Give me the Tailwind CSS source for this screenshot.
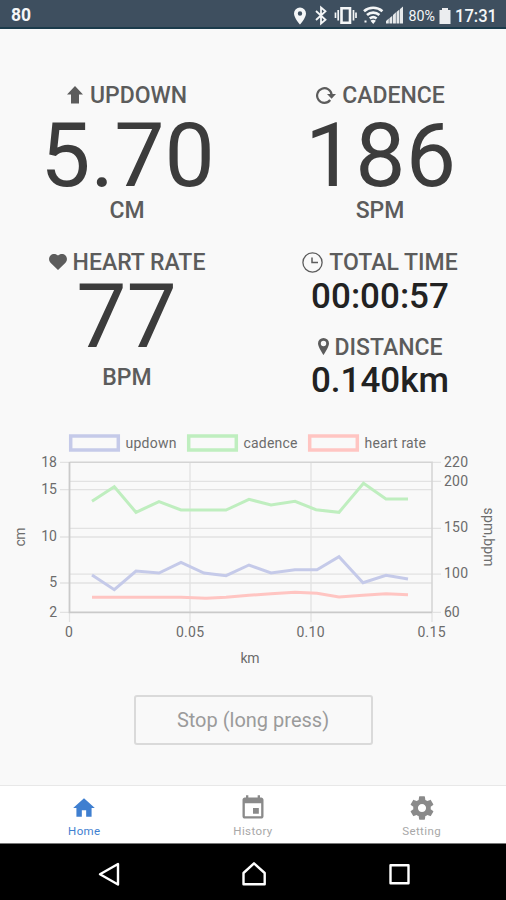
<!DOCTYPE html>
<html lang="en">

<head>
    <meta charset="UTF-8">
    <meta name="viewport" content="width=device-width, initial-scale=1.0">
    <title>Running Monitor</title>
    <script src="https://cdn.jsdelivr.net/npm/@tailwindcss/browser@4"></script>
</head>

<body class="bg-[#f9f9f9] font-[Roboto,sans-serif]">
    <div class="w-[506px] h-[900px] flex flex-col overflow-hidden">
        <header class="h-[29px] shrink-0 bg-[#3e4f5f] border-b-2 border-[#1b3b4b] flex items-center justify-between pl-[11px] pr-[5px] pt-[3px] text-[#f4f6f7]">
            <span class="text-[17.500px] font-bold">80</span>
            <svg class="w-[224px] h-[26px]" viewBox="277 2 224 26" fill="currentColor">
                <path d="M300 7.500a6 6 0 0 0-6 6c0 4.400 6 11 6 11s6-6.600 6-11a6 6 0 0 0-6-6zm0 8.200a2.200 2.200 0 1 1 0-4.400 2.200 2.200 0 0 1 0 4.400z" />
                <path d="M316 11l9.500 8.800-4.500 3.700V7.500l4.500 3.700-9.500 8.800" fill="none" stroke="currentColor" stroke-width="1.800" />
                <path d="M341.500 8.300h8.500v14.400h-8.500z" fill="none" stroke="currentColor" stroke-width="2.600" />
                <path d="M338.200 10v10.500M353.500 10v10.500M335.500 12.500v5.500M356 12.500v5.500" stroke="currentColor" stroke-width="1.700" />
                <g fill="none" stroke="currentColor" stroke-width="2.700">
                    <path d="M364 11.200a14 14 0 0 1 18.400 0M367 14.900a9.500 9.500 0 0 1 12.400 0M369.800 18.500a5.500 5.500 0 0 1 6.800 0" />
                </g>
                <path d="M370.500 20.700q2.700-1.800 5.400 0L373.200 24zM364.500 20.500h2v2h-2z" />
                <path d="M386 23.500V21l2.800-2.500v5zM389.400 23.500v-5.200l2.900-2.600v7.800zM393 23.500V15l2.900-2.700v11.200zM396.500 23.500V12l2.900-2.600v14.100zM400 23.500V9l3-2.500v17z" opacity=".92" />
                <text x="408.500" y="21" font-size="15" textLength="26.500" lengthAdjust="spacingAndGlyphs">80%</text>
                <path d="M439.500 10h2.500V8h6v2h2.500v14h-11z" opacity=".95" />
                <text x="455" y="22" font-size="18" font-weight="500" textLength="42" lengthAdjust="spacingAndGlyphs">17:31</text>
            </svg>
        </header>

        <main class="flex-1 flex flex-col items-center">
            <section class="w-full grid grid-cols-2 content-start pt-[54px] h-[403px] text-center text-[#5c5c5c] text-[23px] font-medium">
                <div>
                    <h2 class="h-6 pt-[2px] leading-6 flex justify-center items-center gap-[7px] pl-px">
                        <svg class="-mt-[2px] w-4 h-[18px]" viewBox="0 0 16 18" fill="currentColor"><path d="M8 0l8 8.500h-4V17.500H4V8.500H0z" /></svg>
                        UPDOWN
                    </h2>
                    <p class="mt-[13px] text-[89.500px] leading-[72px] font-normal text-[#3c3c3c] pl-[2px]">5.70</p>
                    <p class="mt-[7px] leading-6 pl-px">CM</p>
                </div>
                <div>
                    <h2 class="h-6 pt-[2px] leading-6 flex justify-center items-center gap-[6px] pl-[2px]">
                        <svg class="-mt-[2px] w-5 h-[18px]" viewBox="0 0 20 18" fill="none" stroke="currentColor" stroke-width="2.200"><path d="M14.200 14A7.300 7.300 0 1 1 15.700 9" /><path d="M11 8h9l-4.400 4.800z" fill="currentColor" stroke="none" /></svg>
                        CADENCE
                    </h2>
                    <p class="mt-[13px] text-[89.500px] leading-[72px] font-normal text-[#3c3c3c] pl-[2px]">186</p>
                    <p class="mt-[7px] leading-6 pl-px">SPM</p>
                </div>
                <div class="pt-[27px]">
                    <h2 class="h-6 pt-[2px] leading-6 flex justify-center items-center gap-[6px] pl-px">
                        <svg class="-mt-[2px] w-[18px] h-4" viewBox="0 0 18 16" fill="currentColor"><path d="M9 16L1.500 8.700C-.5 6.500-.3 3.200 1.500 1.400 3.700-.6 7.200-.3 9 1.600 10.800-.3 14.300-.6 16.500 1.400c1.800 1.800 2 5.100 0 7.300z" /></svg>
                        HEART RATE
                    </h2>
                    <p class="mt-[7px] text-[89.500px] leading-[72px] font-normal text-[#3c3c3c]">77</p>
                    <p class="mt-[13px] leading-6 pl-px">BPM</p>
                </div>
                <div class="pt-[27px]">
                    <h2 class="h-6 pt-[2px] leading-6 flex justify-center items-center gap-[6px] pl-px">
                        <svg class="-mt-[2px] size-[21px]" viewBox="0 0 21 21" fill="none" stroke="currentColor"><circle cx="10.500" cy="10.500" r="9.600" stroke-width="1.300" /><path d="M10 5.500v5h6" stroke-width="1.500" /></svg>
                        TOTAL TIME
                    </h2>
                    <p class="text-[35px] leading-[46px] text-[#222] pl-px">00:00:57</p>
                    <h2 class="h-6 pt-[2px] leading-6 mt-[15px] flex justify-center items-center gap-[6px] pl-px">
                        <svg class="-mt-[4px] w-[11px] h-[17px]" viewBox="0 0 11 17" fill="currentColor"><path fill-rule="evenodd" d="M5.500 0A5.500 5.500 0 0 0 0 5.500C0 9 5.500 17 5.500 17S11 9 11 5.500A5.500 5.500 0 0 0 5.500 0zm0 8.200a2.700 2.700 0 1 1 0-5.400 2.700 2.700 0 0 1 0 5.400z" /></svg>
                        DISTANCE
                    </h2>
                    <p class="text-[35px] leading-[44px] text-[#222] pl-px">0.140km</p>
                </div>
            </section>

            <svg class="w-[506px] h-[238px] shrink-0" viewBox="0 432 506 238" font-size="14" fill="#6c6c6c">
                <!-- legend -->
                <g fill="none" stroke-width="3.500">
                    <path d="M70.700 436.100h47.600v14H70.700z" stroke="#c5cae9" />
                    <path d="M188.700 436.100h47.600v14h-47.600z" stroke="#bfeebf" />
                    <path d="M309.700 436.100h47.600v14h-47.600z" stroke="#ffc5c2" />
                </g>
                <text x="125.500" y="447.500" textLength="51">updown</text>
                <text x="243.500" y="447.500" textLength="54">cadence</text>
                <text x="364.500" y="447.500" textLength="61.500">heart rate</text>

                <!-- grid -->
                <g fill="none" stroke="#e2e2e2" stroke-width="1.300">
                    <path d="M60 489.700h372M60 537h372M60 583h372M69 481.300h372M69 528.300h372M69 574.200h372" />
                    <path d="M190 462v160M311 462v160M60 462.300h9M60 612.300h9M432 462.300h9M432 612.300h9M69.500 612v10M432 612v10" />
                </g>
                <path d="M69.500 462.300H432V612.300" fill="none" stroke="#d4d4d4" stroke-width="1.500" />
                <path d="M69.500 462V612.300H432" fill="none" stroke="#cacaca" stroke-width="1.800" />

                <!-- series -->
                <g fill="none" stroke-width="3">
                    <path d="M92 597.300H181L206 598.300 226 597.300 249 595.300 271 593.700 295 592.300 317 593.300 339 597 363 595.300 386 593.700 408 594.700" stroke="#ffc5c2" />
                    <path d="M92 501.300L114.300 486.700 136 512.300 159 501.700 181 510H226L249 499.300 271 505 295 501.300 316 509.700 339 512.300 363.500 483.300 386 499H408" stroke="#bfeebf" />
                    <path d="M92 575L114.300 589.700 136 571 159 573 181 562.300 204 573 226 575.700 249 565 271 573 295 569.700H317L339 556.700 363 582.700 386 575.300 408 579" stroke="#c5cae9" />
                </g>

                <!-- axis labels -->
                <g text-anchor="end">
                    <text x="57" y="466.700">18</text>
                    <text x="57" y="494">15</text>
                    <text x="57" y="541.300">10</text>
                    <text x="57" y="587.300">5</text>
                    <text x="57" y="616.700">2</text>
                </g>
                <text x="444" y="466.700" textLength="24">220</text>
                <text x="444" y="485.700" textLength="24">200</text>
                <text x="444" y="532.300" textLength="24">150</text>
                <text x="444" y="578.300" textLength="24">100</text>
                <text x="444" y="616.700">60</text>
                <g text-anchor="middle">
                    <text x="69" y="636.500">0</text>
                    <text x="190" y="636.500" textLength="28">0.05</text>
                    <text x="310.500" y="636.500" textLength="28">0.10</text>
                    <text x="431.500" y="636.500" textLength="28">0.15</text>
                    <text x="250" y="662.500" textLength="19">km</text>
                    <text transform="translate(24.500 537) rotate(-90)" textLength="19">cm</text>
                    <text transform="translate(483.500 537) rotate(90)" textLength="59">spm,bpm</text>
                </g>
            </svg>

            <button class="mt-[25px] w-[239px] h-[50px] border-2 border-[#dadada] rounded-[3px] text-[20px] text-[#9b9b9b]">Stop (long press)</button>
        </main>

        <nav class="h-[58px] shrink-0 bg-white border-t border-[#e8e8e8] grid grid-cols-3 text-[11.500px] tracking-[0.4px] text-[#a8a8a8]">
            <div class="flex flex-col items-center pt-[9px] text-[#3f7fd0]">
                <svg class="size-[26px]" viewBox="0 0 24 24" fill="currentColor"><path d="M10 20v-6h4v6h5v-8h3L12 3 2 12h3v8z" /></svg>
                <span class="leading-[20px]">Home</span>
            </div>
            <div class="flex flex-col items-center pt-[9px]">
                <svg class="size-[28px] -mt-px -mb-px text-[#8a8a8a]" viewBox="0 0 24 24" fill="currentColor"><path d="M17 12h-5v5h5v-5zM16 1v2H8V1H6v2H5c-1.110 0-1.990.9-1.990 2L3 19c0 1.100.89 2 2 2h14c1.100 0 2-.9 2-2V5c0-1.100-.9-2-2-2h-1V1h-2zm3 18H5V8h14v11z" /></svg>
                <span class="leading-[20px]">History</span>
            </div>
            <div class="flex flex-col items-center pt-[9px]">
                <svg class="size-[28px] -mt-px -mb-px text-[#8a8a8a]" viewBox="0 0 24 24" fill="currentColor"><path d="M19.430 12.980c.04-.32.07-.64.07-.98s-.03-.66-.07-.98l2.110-1.650c.19-.15.24-.42.12-.64l-2-3.460c-.12-.22-.39-.3-.61-.22l-2.490 1c-.52-.4-1.080-.73-1.690-.98l-.38-2.650C14.460 2.180 14.250 2 14 2h-4c-.25 0-.46.18-.49.42l-.38 2.650c-.61.25-1.170.59-1.690.98l-2.490-1c-.23-.09-.49 0-.61.22l-2 3.460c-.13.22-.07.49.12.64l2.110 1.650c-.04.32-.07.65-.07.98s.03.66.07.98l-2.110 1.650c-.19.15-.24.42-.12.64l2 3.460c.12.22.39.3.61.22l2.490-1c.52.4 1.080.73 1.690.98l.38 2.650c.03.24.24.42.49.42h4c.25 0 .46-.18.49-.42l.38-2.650c.61-.25 1.170-.59 1.690-.98l2.490 1c.23.09.49 0 .61-.22l2-3.460c.12-.22.07-.49-.12-.64l-2.110-1.650zM12 15.500c-1.930 0-3.500-1.570-3.500-3.500s1.570-3.500 3.500-3.500 3.500 1.570 3.500 3.500-1.570 3.500-3.500 3.500z" /></svg>
                <span class="leading-[20px]">Setting</span>
            </div>
        </nav>

        <footer class="h-[57px] shrink-0 bg-black border-t border-[#777]">
            <svg class="w-[506px] h-14" viewBox="0 844 506 56" fill="none" stroke="#fff" stroke-width="2.400" stroke-linejoin="round">
                <path d="M118 864v20.500L100 874.300z" />
                <path d="M243.500 884.300V873L254 863.300 264.700 873v11.300z" />
                <path d="M390.500 865.300h18v18h-18z" />
            </svg>
        </footer>
    </div>
</body>

</html>
